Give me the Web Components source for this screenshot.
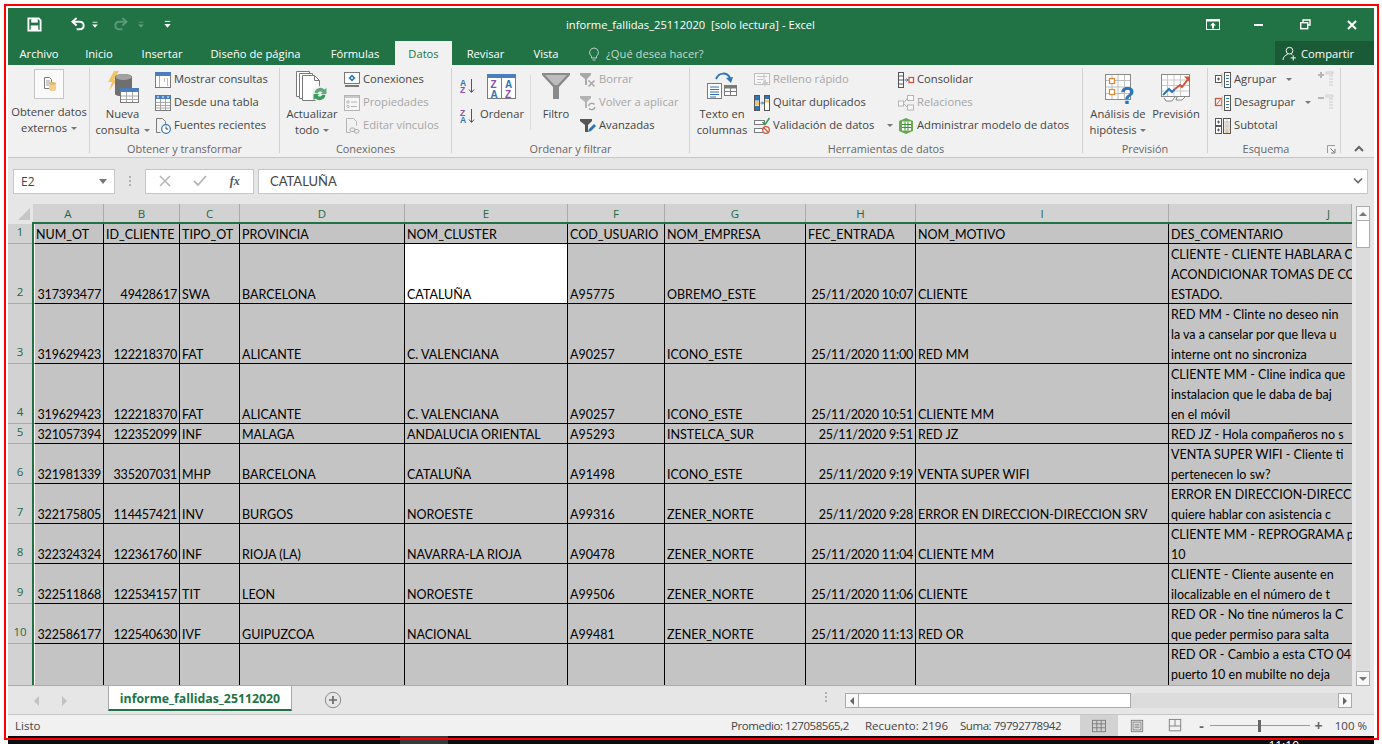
<!DOCTYPE html>
<html lang="es">
<head>
<meta charset="utf-8">
<title>informe_fallidas_25112020 - Excel</title>
<style>
  html, body { margin: 0; height: 744px; overflow: hidden; background: #fff; }
  body { font: 11.2px "Open Sans", "Noto Sans", sans-serif; color: #444; }
</style>
</head>
<body>
<xl-window>
  <xl-titlebar>informe_fallidas_25112020&nbsp; [solo lectura] - Excel</xl-titlebar>
  <xl-tabs>
    <xl-tab w="62">Archivo</xl-tab>
    <xl-tab w="58">Inicio</xl-tab>
    <xl-tab w="68">Insertar</xl-tab>
    <xl-tab w="119">Diseño de página</xl-tab>
    <xl-tab w="80">Fórmulas</xl-tab>
    <xl-tab w="57" active>Datos</xl-tab>
    <xl-tab w="67">Revisar</xl-tab>
    <xl-tab w="54">Vista</xl-tab>
  </xl-tabs>
  <xl-ribbon>
    <xl-group w="82" label="">
      <xl-big w="76" h="35" top icon="obtener" style="margin-left:3px;margin-top:1px">Obtener datos<br>externos <xl-caret></xl-caret></xl-big>
    </xl-group>
    <xl-group w="190" label="Obtener y transformar">
      <xl-big w="57" icon="nueva" style="margin-left:4px">Nueva<br>consulta <xl-caret></xl-caret></xl-big>
      <xl-stack style="margin-left:4px">
        <xl-small icon="mostrar">Mostrar consultas</xl-small>
        <xl-small icon="tabla">Desde una tabla</xl-small>
        <xl-small icon="fuentes">Fuentes recientes</xl-small>
      </xl-stack>
    </xl-group>
    <xl-group w="172" label="Conexiones">
      <xl-big w="52" icon="actualizar" style="margin-left:6px">Actualizar<br>todo <xl-caret></xl-caret></xl-big>
      <xl-stack style="margin-left:6px">
        <xl-small icon="conexiones">Conexiones</xl-small>
        <xl-small icon="propiedades" off>Propiedades</xl-small>
        <xl-small icon="vinculos" off>Editar vínculos</xl-small>
      </xl-stack>
    </xl-group>
    <xl-group w="238" label="Ordenar y filtrar">
      <xl-stack style="margin-left:8px;width:16px;padding-top:10px;gap:14px">
        <xl-icon name="az" size="16"></xl-icon>
        <xl-icon name="za" size="16"></xl-icon>
      </xl-stack>
      <xl-big w="44" icon="ordenar" style="margin-left:4px">Ordenar</xl-big>
      <xl-rule></xl-rule>
      <xl-big w="32" icon="filtro" style="margin-left:9px">Filtro</xl-big>
      <xl-stack style="margin-left:8px">
        <xl-small icon="borrar" off>Borrar</xl-small>
        <xl-small icon="volver" off>Volver a aplicar</xl-small>
        <xl-small icon="avanzadas">Avanzadas</xl-small>
      </xl-stack>
    </xl-group>
    <xl-group w="393" label="Herramientas de datos">
      <xl-big w="52" icon="texto" style="margin-left:6px">Texto en<br>columnas</xl-big>
      <xl-stack style="margin-left:6px;width:138px">
        <xl-small icon="relleno" off>Relleno rápido</xl-small>
        <xl-small icon="duplicados">Quitar duplicados</xl-small>
        <xl-small icon="validacion" caret="10">Validación de datos</xl-small>
      </xl-stack>
      <xl-stack style="margin-left:6px">
        <xl-small icon="consolidar">Consolidar</xl-small>
        <xl-small icon="relaciones" off>Relaciones</xl-small>
        <xl-small icon="modelo">Administrar modelo de datos</xl-small>
      </xl-stack>
    </xl-group>
    <xl-group w="125" label="Previsión">
      <xl-big w="56" icon="analisis" style="margin-left:7px">Análisis de<br>hipótesis <xl-caret></xl-caret></xl-big>
      <xl-big w="48" icon="prevision" style="margin-left:6px">Previsión</xl-big>
    </xl-group>
    <xl-group w="133" label="Esquema" launcher>
      <xl-stack style="margin-left:7px;width:96px">
        <xl-small icon="agrupar" caret="7">Agrupar</xl-small>
        <xl-small icon="desagrupar" caret="7">Desagrupar</xl-small>
        <xl-small icon="subtotal">Subtotal</xl-small>
      </xl-stack>
      <xl-stack style="margin-left:7px;width:16px;padding-top:3px;gap:7px">
        <xl-icon name="mas" size="16"></xl-icon>
        <xl-icon name="menos" size="16"></xl-icon>
      </xl-stack>
    </xl-group>
    <xl-collapse></xl-collapse>
  </xl-ribbon>
  <xl-formula ref="E2">CATALUÑA</xl-formula>
  <xl-sheet></xl-sheet>
  <xl-sheettabs>informe_fallidas_25112020</xl-sheettabs>
  <xl-status></xl-status>
</xl-window>
<xl-taskbar></xl-taskbar>
<xl-frame></xl-frame>

<script>
// icons, all drawn by hand on their own px grid
const ICONS = {
  save: [16, '<path d="M1.5 1.5h11l2 2v11h-13z" fill="none" stroke="#fff" stroke-width="2"/><rect x="4.5" y="2" width="7" height="4" fill="#fff"/><rect x="4" y="9" width="8" height="5" fill="#fff"/>'],
  undo: [16, '<path d="M6 1 1.5 5 6 9" fill="none" stroke="#fff" stroke-width="2"/><path d="M2 5h7c6 0 6 8 0 8H6" fill="none" stroke="#fff" stroke-width="2"/>'],
  redo: [16, '<path d="M10 1l4.5 4L10 9" fill="none" stroke="#5b9a78" stroke-width="2"/><path d="M14 5H7c-6 0-6 8 0 8h3" fill="none" stroke="#5b9a78" stroke-width="2"/>'],
  custom: [10, '<rect x="2" y="1" width="6" height="1" fill="#fff"/><path d="M1.5 4.5h7L5 8.5z" fill="#fff"/>'],
  display: [14, '<rect x=".5" y="1.5" width="13" height="10" fill="none" stroke="#fff"/><rect x="1" y="2" width="12" height="1.5" fill="#fff"/><path d="M7 4.5l3 3H8v3H6v-3H4z" fill="#fff"/>'],
  minimize: [10, '<rect y="4" width="9" height="2" fill="#fff"/>'],
  restore: [11, '<path d="M3 3V1h7v5H8" fill="none" stroke="#fff" stroke-width="1.4"/><rect x=".7" y="3.7" width="7" height="6" fill="none" stroke="#fff" stroke-width="1.4"/>'],
  close: [10, '<path d="M1 1l8 8M9 1 1 9" stroke="#fff" stroke-width="2"/>'],
  share: [16, '<circle cx="8" cy="5" r="3.6" fill="none" stroke="#fff"/><path d="M1 15c0-3 2.5-5.5 5-6M10 9l1 .5" fill="none" stroke="#fff"/><path d="M12 10v5.5M9.2 12.7h5.6" stroke="#fff"/>'],
  bulb: [12, '<path d="M6 1a4.5 4.5 0 0 0-2.5 8.2V11h5V9.2A4.5 4.5 0 0 0 6 1z" fill="none" stroke="#bcd0c4"/><path d="M4.5 13h3" stroke="#bcd0c4"/>'],
  obtener: [30, '<rect x=".5" y=".5" width="29" height="29" fill="#fafafa" stroke="#c6c6c6"/><path d="M10.5 8.500h5l2 2v9h-7z" fill="#fff" stroke="#7a7a7a"/><path d="M12 12h4M12 14h4M12 16h3" stroke="#9a9a9a"/><ellipse cx="18.500" cy="14.500" rx="3.500" ry="1.500" fill="#e3b565"/><path d="M15 14.500v6c0 2 7 2 7 0v-6c0 2-7 2-7 0z" fill="#f2cf8d"/>'],
  nueva: [34, '<path d="M8 1h5L8 10h3L3 21l3-9H2z" fill="#f2c56b"/><path d="M9 7c0-4 17-4 17 0v17c0 3-17 3-17 0z" fill="#6f6f6f"/><ellipse cx="17.500" cy="7" rx="8" ry="3" fill="#a2a2a2"/><rect x="14.500" y="18.500" width="18" height="14" fill="#fff" stroke="#7a7a7a"/><rect x="14" y="18" width="19" height="4" fill="#4a7fbb"/><path d="M15 26h17M15 29.500h17M20.500 22v10M26.500 22v10" stroke="#a6a6a6"/>'],
  mostrar: [16, '<rect x=".5" y=".5" width="15" height="15" fill="#fff" stroke="#7a7a7a"/><rect width="16" height="4" fill="#4a7fbb"/><path d="M4.500 4v11" stroke="#b0b0b0"/><path d="M9 7h1M12 7h1M9 9h1M12 9h1M12 11h1M12 13h1" stroke="#7a7a7a"/>'],
  tabla: [16, '<rect x=".5" y=".5" width="15" height="15" fill="#fff" stroke="#7a7a7a"/><rect width="16" height="4" fill="#4a7fbb"/><path d="M2 2h2M7 2h2M12 2h2" stroke="#fff"/><path d="M1 7.500h14M1 10.500h14M1 13h14M5.500 4v11M10.500 4v11" stroke="#a6a6a6"/>'],
  fuentes: [16, '<path d="M1.500 .5h6l3 3V6M1.500.5v14h4" fill="none" stroke="#7a7a7a"/><circle cx="11" cy="11" r="4.300" fill="#fff" stroke="#2e75b6" stroke-width="1.200"/><path d="M11 8.500V11h2.200" fill="none" stroke="#444"/>'],
  actualizar: [34, '<path d="M1.500 1.500h13v25h-13z" fill="#fff" stroke="#7a7a7a"/><path d="M4.500 3.500h13v25h-13z" fill="#fff" stroke="#7a7a7a"/><path d="M7.500 5.500h12l5 5v20h-17z" fill="#fff" stroke="#7a7a7a"/><path d="M19.500 5.500v5h5" fill="none" stroke="#7a7a7a"/><circle cx="25" cy="24" r="8" fill="#f1f1f1"/><path d="M19.500 23a6 6 0 0 1 10-3.500l2-1.500v6h-6l2-1.500a3 3 0 0 0-5 1z" fill="#5fa97c"/><path d="M30.500 25a6 6 0 0 1-10 3.500l-2 1.500v-6h6l-2 1.500a3 3 0 0 0 5-1z" fill="#3f9a62"/>'],
  conexiones: [16, '<rect x=".5" y=".5" width="15" height="11" fill="#fff" stroke="#7a7a7a"/><path d="M8 2.500l3.500 3.500L8 9.500 4.500 6z" fill="#2e75b6"/><circle cx="8" cy="6" r="1" fill="#fff"/><path d="M1 14h14" stroke="#7a7a7a" stroke-width="2"/>'],
  propiedades: [16, '<rect x=".5" y=".5" width="15" height="15" fill="#f6f6f6" stroke="#b5b5b5"/><rect x="1" y="1" width="14" height="2" fill="#c8c8c8"/><circle cx="4" cy="7" r="1.200" fill="none" stroke="#b5b5b5"/><circle cx="4" cy="11.500" r="1.200" fill="none" stroke="#b5b5b5"/><path d="M7 7h6M7 11.500h6" stroke="#b5b5b5"/>'],
  vinculos: [16, '<path d="M2.500 .5h7l3 3v4M2.500.5v14h4" fill="none" stroke="#b5b5b5"/><rect x="6" y="10" width="5" height="3.500" rx="1.700" fill="none" stroke="#a8a8a8"/><rect x="10" y="11.500" width="5" height="3.500" rx="1.700" fill="none" stroke="#a8a8a8"/>'],
  az: [16, '<text x="0" y="7.500" font-size="8.500" font-weight="700" font-family="Liberation Sans" fill="#2e75b6">A</text><text x="0" y="15" font-size="8.500" font-weight="700" font-family="Liberation Sans" fill="#8b4fa8">Z</text><path d="M11.500 1v13M9 11.500l2.500 3 2.500-3" fill="none" stroke="#555"/>'],
  za: [16, '<text x="0" y="7.500" font-size="8.500" font-weight="700" font-family="Liberation Sans" fill="#8b4fa8">Z</text><text x="0" y="15" font-size="8.500" font-weight="700" font-family="Liberation Sans" fill="#2e75b6">A</text><path d="M11.500 1v13M9 11.500l2.500 3 2.500-3" fill="none" stroke="#555"/>'],
  ordenar: [30, '<g transform="translate(0 2)"><rect x=".5" y=".5" width="28" height="24" fill="#fff" stroke="#7a7a7a"/><rect width="29" height="4" fill="#4a7fbb"/><path d="M14.500 4v21" stroke="#7a7a7a"/><text x="3.500" y="14" font-size="10" font-weight="700" font-family="Liberation Sans" fill="#8b4fa8">Z</text><text x="3.500" y="23.500" font-size="10" font-weight="700" font-family="Liberation Sans" fill="#2e75b6">A</text><text x="18" y="14" font-size="10" font-weight="700" font-family="Liberation Sans" fill="#2e75b6">A</text><text x="18" y="23.500" font-size="10" font-weight="700" font-family="Liberation Sans" fill="#8b4fa8">Z</text></g>'],
  filtro: [30, '<path d="M1 1h28v2L18 15v12l-6 0V15L1 3z" fill="#8a8a8a"/><path d="M4 3h22l-9.500 10h-3z" fill="#bdbdbd"/>'],
  borrar: [16, '<path d="M0 1h11v2L7 7v6H5V7L0 3z" fill="#a8a8a8"/><path d="M8.500 8.500l6 6M14.500 8.500l-6 6" stroke="#a8a8a8" stroke-width="1.600"/>'],
  volver: [16, '<path d="M0 1h11v2L7 7v6H5V7L0 3z" fill="#b3b3b3"/><path d="M8.500 11a3.500 3.500 0 0 1 6-1.500M15 12a3.500 3.500 0 0 1-6 1.500" fill="none" stroke="#a0a0a0" stroke-width="1.300"/>'],
  avanzadas: [16, '<path d="M0 1h12v2L8 7v7H5V7L0 3z" fill="#555"/><path d="M8 14l1-3 5-5 2 2-5 5z" fill="#2e75b6"/>'],
  texto: [34, '<rect x="2.500" y="13.500" width="14" height="15" fill="#fff" stroke="#7a7a7a"/><path d="M5 17h9M5 19.500h9M5 22h9M5 24.500h9M5 27h6" stroke="#2e75b6"/><rect x="19.500" y="15.500" width="12" height="10" fill="#fff" stroke="#7a7a7a"/><rect x="20" y="16" width="11" height="2.500" fill="#7a7a7a"/><path d="M20 21.500h11M25.500 18v7" stroke="#7a7a7a"/><path d="M11 9C14 2 22 2 25 8" fill="none" stroke="#2e75b6" stroke-width="2"/><path d="M21 8l5 5 2-6z" fill="#2e75b6"/>'],
  relleno: [16, '<rect x=".5" y="1.500" width="15" height="11" fill="#f8f8f8" stroke="#bdbdbd"/><path d="M3 4.500h10M3 7.500h6M3 10.500h4M10 1v12" stroke="#c5c5c5"/><path d="M12 7 8 12l3 0-1 3 5-5-3 0z" fill="#c8c8c8"/>'],
  duplicados: [16, '<rect x=".5" y=".5" width="5" height="15" fill="#fff" stroke="#555"/><rect x="1" y="1" width="4" height="4.500" fill="#2e75b6"/><rect x="1" y="6" width="4" height="4.500" fill="#f2c56b"/><rect x="1" y="11" width="4" height="4" fill="#2e75b6"/><rect x="10.500" y=".5" width="5" height="15" fill="#fff" stroke="#555"/><rect x="11" y="1" width="4" height="3" fill="#2e75b6"/><rect x="11" y="4.500" width="4" height="3" fill="#f2c56b"/><path d="M6.500 8h3M8 6.500l1.500 1.500L8 9.500" fill="none" stroke="#2e75b6"/>'],
  validacion: [16, '<rect x=".5" y="2.500" width="10" height="4" fill="#fff" stroke="#7a7a7a"/><rect x=".5" y="10.500" width="10" height="4" fill="#fff" stroke="#7a7a7a"/><path d="M8.500 4l2.500 2.500L15.500 0" fill="none" stroke="#3f9a62" stroke-width="1.600"/><circle cx="12" cy="12" r="3.300" fill="#fff" stroke="#d0543a" stroke-width="1.300"/><path d="M9.800 9.800l4.400 4.400" stroke="#d0543a" stroke-width="1.300"/>'],
  consolidar: [16, '<rect x=".5" y=".5" width="5" height="15" fill="#fff" stroke="#555"/><path d="M1 4h4M1 8h4M1 12h4" stroke="#555"/><path d="M6.500 8h3M8.500 6.500 10 8l-1.500 1.500" fill="none" stroke="#2e75b6"/><rect x="11" y="5.500" width="4.500" height="5" fill="#fff" stroke="#d0543a" stroke-width="1.300"/>'],
  relaciones: [16, '<rect x=".5" y="6" width="5" height="5" fill="#f8f8f8" stroke="#b5b5b5"/><rect x="9.500" y=".5" width="6" height="5" fill="#f8f8f8" stroke="#b5b5b5"/><rect x="9.500" y="10" width="6" height="5" fill="#f8f8f8" stroke="#b5b5b5"/><path d="M5.500 8 9.500 3M5.500 8.500l4 4" stroke="#b5b5b5"/>'],
  modelo: [16, '<path d="M1 3 8 0l7 3v10l-7 3-7-3z" fill="#6aa84f"/><rect x="4" y="3.500" width="9" height="9" fill="#fff"/><path d="M4 6.500h9M4 9.500h9M7 3.500v9M10 3.500v9" stroke="#3f8f3a"/>'],
  analisis: [34, '<rect x="4.500" y="4.500" width="25" height="25" fill="#fff" stroke="#8a8a8a"/><path d="M11 5v24M17 5v24M23.500 5v24M5 10.500h24M5 17h24M5 23.500h24" stroke="#bdbdbd"/><rect x="8.500" y="8.500" width="5" height="5" fill="#fff" stroke="#e8862e" stroke-width="1.200"/><rect x="8.500" y="19.500" width="5" height="5" fill="#fff" stroke="#e8862e" stroke-width="1.200"/><text x="19" y="33.500" font-size="24" font-weight="700" font-family="Liberation Sans" fill="#2e75b6">?</text>'],
  prevision: [30, '<g transform="translate(0 2)"><rect x=".5" y=".5" width="28" height="22" fill="#fff" stroke="#8a8a8a"/><path d="M6.500 1v21M13 1v21M19.500 1v21M1 6h27M1 11.500h27M1 17h27" stroke="#c8c8c8"/><path d="M2 21l6-6 3 3 3-3" fill="none" stroke="#2e75b6" stroke-width="2"/><path d="M14 15l5-4 2 2 7-9" fill="none" stroke="#d0543a" stroke-width="2"/><path d="M23 2.500h6v6z" fill="#d0543a"/><path d="M3 24l2 3h6l3-4M16 23l-1 3h6l3-3" fill="#fff" stroke="#8a8a8a"/></g>'],
  agrupar: [16, '<rect x=".5" y="3.500" width="6" height="7" fill="#fff" stroke="#555"/><path d="M2 7h3M3.500 5.500v3" stroke="#555"/><path d="M7 1v14" stroke="#bdbdbd"/><rect x="9.500" y=".5" width="6" height="15" fill="#fff" stroke="#555"/><path d="M11 3.500h3M11 6.500h3M11 9.500h3M11 12.500h3" stroke="#2e75b6"/>'],
  desagrupar: [16, '<rect x=".5" y="3.500" width="6" height="7" fill="#fff" stroke="#d0543a" stroke-width="1.300"/><path d="M1.500 9.500l4-5" stroke="#d0543a"/><path d="M7 1v14" stroke="#bdbdbd"/><rect x="9.500" y=".5" width="6" height="15" fill="#fff" stroke="#555"/><path d="M11 3.500h3M11 6.500h3M11 9.500h3M11 12.500h3" stroke="#2e75b6"/>'],
  subtotal: [16, '<rect x=".5" y=".5" width="6" height="7" fill="#fff" stroke="#555"/><rect x=".5" y="8.500" width="6" height="7" fill="#fff" stroke="#555"/><path d="M2 4h3M3.500 2.500v3M2 12h3M3.500 10.500v3" stroke="#555"/><rect x="8.500" y=".5" width="7" height="15" fill="#fff" stroke="#555"/><path d="M9 4h6M9 8h6M9 12h6M12 1v14" stroke="#bdbdbd"/><path d="M9.500 6h1.500M13 6h1.500M9.500 10h1.500M13 10h1.500M9.500 14h5" stroke="#e8a33a"/>'],
  mas: [16, '<path d="M0 4h6M3 1v6" stroke="#b5b5b5" stroke-width="2"/><path d="M8 1h7v2H8zM11 5h4M11 8h4M11 11h4M11 14h4" stroke="#cdcdcd" fill="none"/>'],
  menos: [16, '<path d="M0 4h6" stroke="#b5b5b5" stroke-width="2"/><path d="M8 1h7v2H8zM11 5h4M11 8h4M11 11h4M11 14h4" stroke="#cdcdcd" fill="none"/>'],
  launcher: [9, '<path d="M.5 8V.5H8" fill="none" stroke="#9a9a9a"/><path d="M3.500 3.500 7 7M8 4v4H4" fill="none" stroke="#777"/>'],
  chevup: [12, '<path d="M2 8l4-4 4 4" fill="none" stroke="#666" stroke-width="2"/>'],
  gridview: [16, '<rect x=".5" y="1.500" width="15" height="13" fill="none" stroke="#777"/><path d="M1 5.500h14M1 10h14M5.500 2v12M10.500 2v12" stroke="#777"/>'],
  pageview: [16, '<rect x="1.500" y="1.500" width="13" height="13" fill="none" stroke="#777"/><rect x="3.500" y="3.500" width="9" height="9" fill="none" stroke="#777"/><path d="M5 6h6M5 8h6M5 10h6" stroke="#777"/>'],
  breakview: [16, '<path d="M1.500 .5v13h13V.5M1 .5h14M8 1v7M1.500 8h13" fill="none" stroke="#777"/>'],
  plus: [18, '<circle cx="9" cy="9" r="7.700" fill="none" stroke="#8a8a8a"/><path d="M5 9h8M9 5v8" stroke="#6a6a6a" stroke-width="1.700"/>']
};

// the markup of one icon, as a string
function iconSvg(name, size) {
  const [box, body] = ICONS[name];
  const s = size || box;
  return `<svg width="${s}" height="${s}" viewBox="0 0 ${box} ${box}" style="display:block;flex:none;overflow:visible">${body}</svg>`;
}

// small base class: markup + styles into an open shadow root
class Shadow extends HTMLElement {
  render(html) {
    if (!this.shadowRoot) this.attachShadow({ mode: 'open' });
    this.shadowRoot.innerHTML = html;
  }
}

class XlIcon extends Shadow {
  connectedCallback() {
    this.render(`<style>:host{display:block}</style>${iconSvg(this.getAttribute('name'), +this.getAttribute('size'))}`);
  }
}

class XlCaret extends Shadow {
  connectedCallback() {
    this.render(`<style>:host{display:inline-block;width:0;height:0;margin:0 0 2px 1px;vertical-align:middle;
      border:3px solid transparent;border-top:3px solid #777;border-bottom:0}</style>`);
  }
}

class XlWindow extends Shadow {
  connectedCallback() {
    this.render(`<style>:host{display:flex;flex-direction:column;width:1366px;height:728px;margin:8px 0 0 8px;background:#e6e6e6}</style><slot></slot>`);
  }
}

class XlTitlebar extends Shadow {
  connectedCallback() {
    this.render(`<style>
      :host{display:grid;grid-template-columns:1fr auto 1fr;height:33px;background:#217346;color:#fff;align-items:center}
      .qat,.ctl{display:flex;align-items:center}
      .title{white-space:nowrap;margin-left:-1px}
      .ctl{justify-content:flex-end}
    </style>
    <div class="qat">
      <span style="margin-left:19px">${iconSvg('save', 15)}</span>
      <span style="margin-left:29px">${iconSvg('undo', 15)}</span>
      <span style="margin-left:5px">${iconSvg('custom', 8)}</span>
      <span style="margin-left:14px">${iconSvg('redo', 15)}</span>
      <span style="margin-left:9px;opacity:.3">${iconSvg('custom', 8)}</span>
      <span style="margin-left:18px">${iconSvg('custom', 9)}</span>
    </div>
    <div class="title"><slot></slot></div>
    <div class="ctl">
      <span>${iconSvg('display', 14)}</span>
      <span style="margin-left:34px">${iconSvg('minimize', 10)}</span>
      <span style="margin-left:36px">${iconSvg('restore', 11)}</span>
      <span style="margin-left:36px;margin-right:17px">${iconSvg('close', 10)}</span>
    </div>`);
  }
}

class XlTabs extends Shadow {
  connectedCallback() {
    this.render(`<style>
      :host{display:flex;height:24px;background:#217346;color:#fff;align-items:stretch}
      .tell{display:flex;align-items:center;gap:6px;margin-left:15px;color:#c6d8cd}
      .share{margin-left:auto;width:99px;background:#1b5a37;display:flex;align-items:center;gap:4px;padding-left:7px;box-sizing:border-box;color:#fff}
    </style>
    <slot></slot>
    <div class="tell">${iconSvg('bulb', 12)}<span>¿Qué desea hacer?</span></div>
    <div class="share">${iconSvg('share', 15)}<span>Compartir</span></div>`);
  }
}

class XlTab extends Shadow {
  connectedCallback() {
    const on = this.hasAttribute('active');
    this.render(`<style>
      :host{display:flex;align-items:center;justify-content:center;width:${this.getAttribute('w')}px;
        background:${on ? '#f1f1f1' : 'transparent'};color:${on ? '#217346' : '#fff'}}
    </style><slot></slot>`);
  }
}

class XlRibbon extends Shadow {
  connectedCallback() {
    this.render(`<style>:host{display:flex;height:89px;padding-top:3px;background:#f1f1f1;border-bottom:1px solid #c6c6c6;color:#444}</style><slot></slot>`);
  }
}

class XlGroup extends Shadow {
  connectedCallback() {
    const launcher = this.hasAttribute('launcher');
    this.render(`<style>
      :host{display:flex;flex-direction:column;box-sizing:border-box;width:${this.getAttribute('w')}px;height:85px;border-right:1px solid #d2d2d2;flex:none}
      .body{display:flex;height:73px;align-items:flex-start}
      .label{position:relative;height:12px;line-height:15.500px;text-align:center;color:#666;font-size:10.900px;white-space:nowrap;${launcher ? 'padding-right:16px;' : ''}}
      .launch{position:absolute;right:4px;top:4px}
    </style>
    <div class="body"><slot></slot></div>
    <div class="label">${this.getAttribute('label')}${launcher ? `<span class="launch">${iconSvg('launcher', 9)}</span>` : ''}</div>`);
  }
}

class XlBig extends Shadow {
  connectedCallback() {
    const h = this.getAttribute('h') || 38;
    const align = this.hasAttribute('top') ? 'flex-start' : 'center';
    this.render(`<style>
      :host{display:block;flex:none;width:${this.getAttribute('w')}px;text-align:center;line-height:16px;white-space:nowrap}
      .ic{height:${h}px;display:flex;justify-content:center;align-items:${align}}
      .tx{display:flex;flex-direction:column;align-items:center}
    </style>
    <div class="ic">${iconSvg(this.getAttribute('icon'))}</div>
    <div class="tx"><div><slot></slot></div></div>`);
  }
}

class XlStack extends Shadow {
  connectedCallback() {
    this.render(`<style>:host{display:flex;flex-direction:column;flex:none}</style><slot></slot>`);
  }
}

class XlSmall extends Shadow {
  connectedCallback() {
    const off = this.hasAttribute('off');
    const caret = this.getAttribute('caret');
    this.render(`<style>
      :host{display:flex;align-items:center;height:23px;gap:3px;white-space:nowrap;color:${off ? '#a6a6a6' : '#444'}}
      span{padding-bottom:2px}
      .tri{width:0;height:0;border:3px solid transparent;border-top:3px solid #777;border-bottom:0;margin-left:${caret || 12}px}
    </style>
    ${iconSvg(this.getAttribute('icon'))}<span><slot></slot></span>${caret !== null ? '<i class="tri"></i>' : ''}`);
  }
}

class XlRule extends Shadow {
  connectedCallback() {
    this.render(`<style>:host{display:block;width:1px;height:55px;margin:7px 0 0 6px;background:#dcdcdc;flex:none}</style>`);
  }
}

class XlCollapse extends Shadow {
  connectedCallback() {
    this.render(`<style>:host{display:flex;flex:1;align-items:flex-end;justify-content:center;height:87px;padding-left:3px}</style>${iconSvg('chevup')}`);
  }
}

class XlFormula extends Shadow {
  connectedCallback() {
    this.render(`<style>
      :host{display:flex;align-items:center;height:46px;padding:0 6px 0 5px;box-sizing:border-box;background:#e6e6e6;color:#444}
      .box{height:25px;box-sizing:border-box;background:#fff;border:1px solid #c6c6c6;display:flex;align-items:center}
      .name{width:102px;padding:0 7px 0 7px;justify-content:space-between;font-size:12px}
      .name i,.tri{width:0;height:0;border:4px solid transparent;border-top:5px solid #777;border-bottom:0}
      .dots{width:30px;display:flex;flex-direction:column;align-items:center;gap:2px}
      .dots b{width:2px;height:2px;background:#b0b0b0}
      .btns{width:109px;justify-content:space-around;padding:0 2px;color:#b4b4b4;font-size:16px}
      .fx{font:italic 700 12px "Liberation Serif",serif;color:#555}
      .val{flex:1;margin-left:4px;padding:0 4px 0 11px;justify-content:space-between;font:13px Lato,"Liberation Sans",sans-serif}
    </style>
    <div class="box name"><span>${this.getAttribute('ref')}</span><i></i></div>
    <div class="dots"><b></b><b></b><b></b></div>
    <div class="box btns">
      <svg width="12" height="12" viewBox="0 0 12 12"><path d="M1 1l10 10M11 1 1 11" stroke="#b4b4b4" stroke-width="1.500"/></svg>
      <svg width="14" height="12" viewBox="0 0 14 12"><path d="M1 6l4 4 8-9" fill="none" stroke="#b4b4b4" stroke-width="1.800"/></svg>
      <span class="fx">fx</span>
    </div>
    <div class="box val"><span><slot></slot></span>
      <svg width="10" height="8" viewBox="0 0 10 8"><path d="M1 1.500l4 4 4-4" fill="none" stroke="#666" stroke-width="1.600"/></svg>
    </div>`);
  }
}

// column widths in px, A to J
const COLS = [
  ['A', 70], ['B', 76], ['C', 60], ['D', 165], ['E', 163],
  ['F', 97], ['G', 141], ['H', 110], ['I', 253], ['J', 183]
];
// height of each row, row 11 runs off the bottom
const HEIGHTS = [20, 60, 60, 60, 20, 40, 40, 40, 40, 40, 60];
const NUM = new Set([0, 1, 7]);
const ROWS = [
  ['NUM_OT', 'ID_CLIENTE', 'TIPO_OT', 'PROVINCIA', 'NOM_CLUSTER', 'COD_USUARIO', 'NOM_EMPRESA', 'FEC_ENTRADA', 'NOM_MOTIVO', ['DES_COMENTARIO']],
  ['317393477', '49428617', 'SWA', 'BARCELONA', 'CATALUÑA', 'A95775', 'OBREMO_ESTE', '25/11/2020 10:07', 'CLIENTE', ['CLIENTE - CLIENTE HABLARA C', 'ACONDICIONAR TOMAS DE CO', 'ESTADO.']],
  ['319629423', '122218370', 'FAT', 'ALICANTE', 'C. VALENCIANA', 'A90257', 'ICONO_ESTE', '25/11/2020 11:00', 'RED MM', ['RED MM - Clinte no deseo nin', 'la va a canselar por que lleva u', 'interne ont no sincroniza']],
  ['319629423', '122218370', 'FAT', 'ALICANTE', 'C. VALENCIANA', 'A90257', 'ICONO_ESTE', '25/11/2020 10:51', 'CLIENTE MM', ['CLIENTE MM - Cline indica que', 'instalacion que le daba de baj', 'en el móvil']],
  ['321057394', '122352099', 'INF', 'MALAGA', 'ANDALUCIA ORIENTAL', 'A95293', 'INSTELCA_SUR', '25/11/2020 9:51', 'RED JZ', ['RED JZ - Hola compañeros no s']],
  ['321981339', '335207031', 'MHP', 'BARCELONA', 'CATALUÑA', 'A91498', 'ICONO_ESTE', '25/11/2020 9:19', 'VENTA SUPER WIFI', ['VENTA SUPER WIFI - Cliente ti', 'pertenecen lo sw?']],
  ['322175805', '114457421', 'INV', 'BURGOS', 'NOROESTE', 'A99316', 'ZENER_NORTE', '25/11/2020 9:28', 'ERROR EN DIRECCION-DIRECCION SRV', ['ERROR EN DIRECCION-DIRECC', 'quiere hablar con asistencia c']],
  ['322324324', '122361760', 'INF', 'RIOJA (LA)', 'NAVARRA-LA RIOJA', 'A90478', 'ZENER_NORTE', '25/11/2020 11:04', 'CLIENTE MM', ['CLIENTE MM - REPROGRAMA p', '10']],
  ['322511868', '122534157', 'TIT', 'LEON', 'NOROESTE', 'A99506', 'ZENER_NORTE', '25/11/2020 11:06', 'CLIENTE', ['CLIENTE - Cliente ausente en', 'ilocalizable en el número de t']],
  ['322586177', '122540630', 'IVF', 'GUIPUZCOA', 'NACIONAL', 'A99481', 'ZENER_NORTE', '25/11/2020 11:13', 'RED OR', ['RED OR - No tine números la C', 'que peder permiso para salta']],
  ['', '', '', '', '', '', '', '', '', ['RED OR - Cambio a esta CTO 04', 'puerto 10 en mubilte no deja', '']]
];

class XlSheet extends Shadow {
  connectedCallback() {
    const head = COLS.map(([name, w], i) => {
      const pad = name === 'J' ? 'padding-left:137px;' : '';
      return `<div class="ch" style="${pad}width:${i === 0 ? w + 1 : w}px">${name}</div>`;
    }).join('');
    const rows = ROWS.map((row, r) => {
      const cells = row.map((val, c) => {
        const lines = Array.isArray(val) ? val : [val];
        const active = r === 1 && c === 4 ? ' active' : '';
        const right = r > 0 && NUM.has(c) ? ' num' : '';
        const first = c === 0 ? ' first' : '';
        const inner = lines.map(l => `<div>${l || '&nbsp;'}</div>`).join('');
        return `<div class="cell${active}${right}${first}" style="width:${COLS[c][1]}px">${inner}</div>`;
      }).join('');
      return `<div class="row" style="height:${HEIGHTS[r]}px"><div class="rh">${r + 1}</div><div class="sel"></div>${cells}</div>`;
    }).join('');
    this.render(`<style>
      :host{display:flex;height:482px;background:#e6e6e6;overflow:hidden;flex:none}
      .main{width:1344px;overflow:hidden;flex:none;border-bottom:1px solid #ababab;box-sizing:border-box}
      .heads{display:flex;height:18px;color:#1f6a41;font-size:11.500px}
      .corner{width:25px;box-sizing:border-box;flex:none;display:flex;align-items:flex-end;justify-content:flex-end;padding:0 3px 2px 0;background:#e6e6e6}
      .corner i{width:0;height:0;border-style:solid;border-width:0 0 12px 12px;border-color:transparent transparent #c6c6c6 transparent}
      .ch{background:#d2d2d2;box-sizing:border-box;border-right:1px solid #ababab;text-align:center;line-height:19px;flex:none}
      .green{height:2px;background:#217346;margin-left:24px}
      .body{font:12.500px/20px Lato,"Liberation Sans",sans-serif;color:#000}
      .row{display:flex;box-sizing:border-box}
      .rh{width:24px;flex:none;box-sizing:border-box;background:#d2d2d2;border-bottom:1px solid #ababab;color:#1f6a41;font:11.500px/22px "Open Sans","Noto Sans",sans-serif;
        display:flex;justify-content:center;align-items:flex-end}
      .sel{width:2px;flex:none;background:#217346}
      .cell{box-sizing:border-box;flex:none;background:#c4c4c4;border-right:1px solid #000;border-bottom:1px solid #000;
        padding:0 2px;overflow:hidden;white-space:nowrap;display:flex;flex-direction:column;justify-content:flex-end}
      .cell div{height:20px;flex:none;line-height:23px}
      .cell:last-child{border-right:0}
      .num{text-align:right;letter-spacing:-.2px}
      .first{border-left:1px solid #fff;padding-left:1px}
      .active{background:#fff}
      .vs{width:22px;flex:none;box-sizing:border-box;padding:2px 4px 0 4px;display:flex;flex-direction:column}
      .vs .track{flex:1;background:#dcdcdc}
      .vs .btn{height:15px;box-sizing:border-box;background:#f8f8f8;border:1px solid #ababab;display:flex;align-items:center;justify-content:center}
      .vs .thumb{height:27px;box-sizing:border-box;background:#fff;border:1px solid #ababab;border-top:0}
      .up{width:0;height:0;border:4px solid transparent;border-bottom:4px solid #777;border-top:0}
      .dn{width:0;height:0;border:4px solid transparent;border-top:4px solid #777;border-bottom:0}
    </style>
    <div class="main">
      <div class="heads"><div class="corner"><i></i></div>${head}</div>
      <div class="green"></div>
      <div class="body">${rows}</div>
    </div>
    <div class="vs">
      <div class="btn"><i class="up"></i></div>
      <div class="thumb"></div>
      <div class="track"></div>
      <div class="btn"><i class="dn"></i></div>
    </div>`);
  }
}

class XlSheettabs extends Shadow {
  connectedCallback() {
    this.render(`<style>
      :host{display:flex;align-items:flex-start;height:29px;box-sizing:border-box;background:#e6e6e6;border-bottom:1px solid #c6c6c6;flex:none}
      .nav{width:100px;display:flex;gap:23px;padding:10px 0 0 26px;box-sizing:border-box}
      .l,.r{width:0;height:0;border:5px solid transparent;border-left:0;border-right:5px solid #c2c2c2}
      .r{border-right:0;border-left:5px solid #c2c2c2}
      .tab{width:184px;height:25px;box-sizing:border-box;background:#fff;border:1px solid #ababab;border-top:0;border-bottom:2px solid #217346;
        font-weight:700;font-size:12.300px;color:#217346;text-align:center;line-height:26px}
      .plus{margin:5px 0 0 32px}
      .dots{margin:6px 0 0 483px;display:flex;flex-direction:column;gap:2px;width:2px}
      .dots b{height:2px;background:#b0b0b0}
      .hs{margin:7px 0 0 18px;width:507px;height:15px;display:flex;background:#dcdcdc}
      .b{width:14px;box-sizing:border-box;border:1px solid #ababab;background:#f8f8f8;display:flex;align-items:center;justify-content:center}
      .hs .l,.hs .r{border-width:4px;}
      .hs .l{border-left:0;border-right-color:#666}
      .hs .r{border-right:0;border-left-color:#666}
      .t{width:272px;box-sizing:border-box;background:#fff;border:1px solid #ababab;border-left:0}
      .sp{flex:1}
    </style>
    <div class="nav"><i class="l"></i><i class="r"></i></div>
    <div class="tab"><slot></slot></div>
    <div class="plus">${iconSvg('plus')}</div>
    <div class="dots"><b></b><b></b><b></b></div>
    <div class="hs">
      <div class="b"><i class="l"></i></div><div class="t"></div><div class="sp"></div><div class="b"><i class="r"></i></div>
    </div>`);
  }
}

class XlStatus extends Shadow {
  connectedCallback() {
    this.render(`<style>
      :host{display:flex;align-items:center;height:21px;background:#f1f1f1;color:#444;font-size:11.500px;white-space:nowrap;flex:none}
      .vb{width:38px;height:21px;display:flex;align-items:center;justify-content:center}
      .on{background:#d2d2d2}
      .slider{width:100px;height:12px;margin:0 4px;display:flex;justify-content:center;background:linear-gradient(#9a9a9a,#9a9a9a) center/100% 1px no-repeat}
      .slider i{width:3px;background:#666;margin-left:-2px}
      .pm{width:9px;display:flex;justify-content:center;font-weight:700;font-size:14px;color:#666}
    </style>
    <span style="margin-left:7px;width:716px">Listo</span>
    <span style="width:134px;letter-spacing:-.45px">Promedio: 127058565,2</span>
    <span style="width:95px">Recuento: 2196</span>
    <span style="width:120px;letter-spacing:-.45px">Suma: 79792778942</span>
    <div class="vb on">${iconSvg('gridview', 14)}</div>
    <div class="vb">${iconSvg('pageview', 14)}</div>
    <div class="vb">${iconSvg('breakview', 14)}</div>
    <span class="pm" style="margin-left:3px">-</span>
    <div class="slider"><i></i></div>
    <span class="pm">+</span>
    <span style="margin-left:auto;margin-right:7px">100 %</span>`);
  }
}

class XlTaskbar extends Shadow {
  connectedCallback() {
    this.render(`<style>
      :host{display:flex;height:8px;width:1366px;margin-left:8px;background:#0b0b10;overflow:hidden;color:#fff}
      .b{width:48px;margin-left:392px;background:#3a3a3e}
      .t{margin-left:auto;margin-right:75px;padding-top:3px;font-size:12px;line-height:14px}
    </style><div class="b"></div><div class="t">11:10</div>`);
  }
}

// the red outline sits over the whole capture
class XlFrame extends Shadow {
  connectedCallback() {
    this.render(`<style>:host{position:absolute;left:4px;top:4px;width:1375px;height:736px;box-sizing:border-box;border:2px solid #f00;pointer-events:none}</style>`);
  }
}

const tags = {
  'xl-icon': XlIcon, 'xl-caret': XlCaret, 'xl-window': XlWindow, 'xl-titlebar': XlTitlebar,
  'xl-tabs': XlTabs, 'xl-tab': XlTab, 'xl-ribbon': XlRibbon, 'xl-group': XlGroup,
  'xl-big': XlBig, 'xl-stack': XlStack, 'xl-small': XlSmall, 'xl-rule': XlRule,
  'xl-collapse': XlCollapse, 'xl-formula': XlFormula, 'xl-sheet': XlSheet,
  'xl-sheettabs': XlSheettabs, 'xl-status': XlStatus, 'xl-taskbar': XlTaskbar, 'xl-frame': XlFrame
};
Object.entries(tags).forEach(([name, cls]) => customElements.define(name, cls));
</script>
</body>
</html>
